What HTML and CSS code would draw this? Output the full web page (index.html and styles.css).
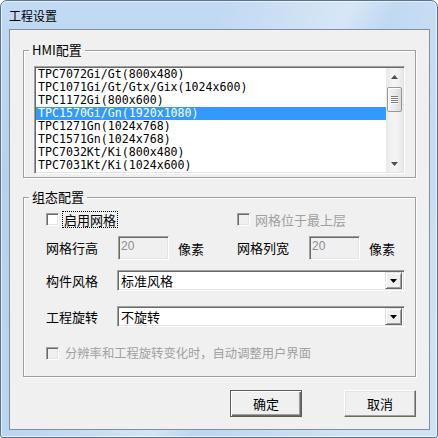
FILE: index.html
```html
<!DOCTYPE html>
<html lang="zh-CN">
<head>
<meta charset="utf-8">
<title>工程设置</title>
<link rel="stylesheet" href="styles.css">
</head>
<body>
<div class="window">
  <div class="titlebar"><span class="title">工程设置</span></div>
  <div class="client">
    <fieldset class="group group-hmi">
      <legend class="group-title">HMI配置</legend>
      <div class="listbox">
        <ul class="items">
          <li>TPC7072Gi/Gt(800x480)</li>
          <li>TPC1071Gi/Gt/Gtx/Gix(1024x600)</li>
          <li>TPC1172Gi(800x600)</li>
          <li class="selected">TPC1570Gi/Gn(1920x1080)</li>
          <li>TPC1271Gn(1024x768)</li>
          <li>TPC1571Gn(1024x768)</li>
          <li>TPC7032Kt/Ki(800x480)</li>
          <li>TPC7031Kt/Ki(1024x600)</li>
        </ul>
        <div class="scrollbar">
          <div class="sb-arrow"><svg width="7" height="4" viewBox="0 0 7 4"><path d="M3.5 0 L7 4 L0 4 Z" fill="#4d4d4d"/></svg></div>
          <div class="sb-track">
            <div class="sb-thumb"><i></i><i></i><i></i><i></i></div>
          </div>
          <div class="sb-arrow"><svg width="7" height="4" viewBox="0 0 7 4"><path d="M0 0 L7 0 L3.5 4 Z" fill="#4d4d4d"/></svg></div>
        </div>
      </div>
    </fieldset>

    <fieldset class="group group-config">
      <legend class="group-title">组态配置</legend>
      <div class="row row-check">
        <div class="half">
          <span class="checkbox"></span>
          <span class="check-label focus">启用网格</span>
        </div>
        <div class="half">
          <span class="checkbox disabled"></span>
          <span class="check-label muted">网格位于最上层</span>
        </div>
      </div>
      <div class="row row-input">
        <div class="half">
          <span class="label">网格行高</span>
          <span class="textbox">20</span>
          <span class="unit">像素</span>
        </div>
        <div class="half">
          <span class="label">网格列宽</span>
          <span class="textbox">20</span>
          <span class="unit">像素</span>
        </div>
      </div>
      <div class="row row-combo first">
        <span class="label">构件风格</span>
        <div class="combo">
          <span class="combo-text">标准风格</span>
          <span class="combo-btn"><svg width="7" height="4" viewBox="0 0 7 4"><path d="M0 0 L7 0 L3.5 4 Z" fill="#000"/></svg></span>
        </div>
      </div>
      <div class="row row-combo second">
        <span class="label">工程旋转</span>
        <div class="combo">
          <span class="combo-text">不旋转</span>
          <span class="combo-btn"><svg width="7" height="4" viewBox="0 0 7 4"><path d="M0 0 L7 0 L3.5 4 Z" fill="#000"/></svg></span>
        </div>
      </div>
      <div class="row row-auto">
        <span class="checkbox disabled"></span>
        <span class="check-label muted long">分辨率和工程旋转变化时，自动调整用户界面</span>
      </div>
    </fieldset>

    <div class="buttons">
      <button class="btn default">确定</button>
      <button class="btn">取消</button>
    </div>
  </div>
</div>
</body>
</html>
```

FILE: styles.css
```css
* { box-sizing: border-box; }

html, body {
  margin: 0;
  padding: 0;
  background: #ffffff;
}

body {
  font-family: "Noto Sans CJK SC", "Liberation Sans", sans-serif;
  font-size: 13px;
  color: #000;
}

.window {
  width: 438px;
  height: 438px;
  display: flex;
  flex-direction: column;
  padding: 0 7px 7px 8px;
  border: 1px solid #5a7391;
  border-radius: 7px 7px 3px 3px;
  background:
    linear-gradient(115deg, rgba(255,255,255,0) 35%, rgba(255,255,255,0.35) 55%, rgba(255,255,255,0) 62%, rgba(255,255,255,0.3) 85%),
    linear-gradient(180deg, #c2daf3 0%, #b6d1ee 40%, #bcd6f0 100%);
  box-shadow: inset 0 0 0 1px rgba(255,255,255,0.6);
  overflow: hidden;
}

.titlebar {
  height: 28px;
  padding: 5px 0 0 0;
  flex: none;
}

.title {
  font-size: 12px;
  line-height: 14px;
  color: #000;
}

.client {
  flex: 1;
  display: flex;
  flex-direction: column;
  background: #f0f0f0;
  border: 1px solid #7e8fa2;
}

/* group boxes */
.group {
  margin: 0 0 0 13px;
  width: 393px;
  border: 1px solid #a0a0a0;
  box-shadow: 1px 1px 0 #fff, inset 1px 1px 0 #fff;
  border-radius: 0;
  min-width: 0;
}

.group-title {
  font-size: 13px;
  line-height: 14px;
  padding: 0 3px 0 3px;
  margin-left: -5px;
}

.group-hmi {
  margin-top: 13px;
  padding: 9px 10px 3px 10px;
}

.group-config {
  margin-top: 12px;
  padding: 7px 10px 14px 22px;
}

.group-config .group-title {
  margin-left: -17px;
}

/* listbox */
.listbox {
  display: flex;
  height: 108px;
  border: 1px solid;
  border-color: #a0a0a0 #ffffff #ffffff #a0a0a0;
  box-shadow: inset 1px 1px 0 #696969, inset -1px -1px 0 #e3e3e3;
  background: #fff;
  padding: 1px;
}

.items {
  flex: 1;
  list-style: none;
  margin: 0;
  padding: 0;
  overflow: hidden;
}

.items li {
  height: 13px;
  line-height: 13px;
  padding-left: 2px;
  font-family: "DejaVu Sans Mono", "Liberation Mono", monospace;
  font-size: 11.6px;
  white-space: nowrap;
  color: #000;
}

.items li.selected {
  background: #3399ff;
  color: #fff;
}

.scrollbar {
  width: 17px;
  flex: none;
  display: flex;
  flex-direction: column;
  background: linear-gradient(90deg, #e8e8e8, #f4f4f4 40%, #f4f4f4 60%, #e8e8e8);
}

.sb-arrow {
  height: 17px;
  display: flex;
  align-items: center;
  justify-content: center;
  flex: none;
}

.sb-track {
  flex: 1;
  padding-top: 2px;
}

.sb-thumb {
  margin: 0 1px;
  height: 25px;
  border: 1px solid #979797;
  border-radius: 2px;
  background: linear-gradient(90deg, #f2f2f2, #ebebeb 50%, #d9d9d9);
  box-shadow: inset 1px 1px 0 #fff;
  display: flex;
  flex-direction: column;
  align-items: center;
  justify-content: center;
  gap: 1px;
}

.sb-thumb i {
  display: block;
  width: 7px;
  height: 1px;
  background: #7a7a7a;
  box-shadow: 0 1px 0 #fff;
}

/* rows in config group */
.row {
  display: flex;
  align-items: center;
}

.half {
  width: 191px;
  display: flex;
  align-items: center;
  flex: none;
}

.row-check {
  height: 17px;
}

.row-input {
  margin-top: 8px;
  height: 24px;
}

.row-combo {
  height: 21px;
}

.row-combo.first {
  margin-top: 10px;
}

.row-combo.second {
  margin-top: 15px;
}

.row-auto {
  margin-top: 18px;
  height: 17px;
}

.checkbox {
  width: 13px;
  height: 13px;
  flex: none;
  border: 1px solid;
  border-color: #a0a0a0 #fff #fff #a0a0a0;
  box-shadow: inset 1px 1px 0 #696969, inset -1px -1px 0 #e3e3e3;
  background: #fff;
}

.checkbox.disabled {
  background: #f0f0f0;
}

.check-label {
  margin-left: 3px;
  padding: 0 1px;
  line-height: 15px;
  border: 1px solid transparent;
  white-space: nowrap;
}

.check-label.focus {
  border: 1px dotted #000;
}

.muted {
  color: #a0a0a0;
}

.check-label.long {
  margin-left: 4px;
  font-size: 12.3px;
}

.label {
  width: 72px;
  flex: none;
  line-height: 16px;
}

.row-combo .label {
  width: 71px;
}

.textbox {
  width: 51px;
  height: 24px;
  flex: none;
  border: 1px solid;
  border-color: #a0a0a0 #fff #fff #a0a0a0;
  box-shadow: inset 1px 1px 0 #696969, inset -1px -1px 0 #e3e3e3;
  background: #f0f0f0;
  font-family: "Liberation Sans", sans-serif;
  font-size: 12px;
  color: #8d8d8d;
  padding: 2px 0 0 2px;
  line-height: 14px;
}

.unit {
  margin-left: 9px;
}

.combo {
  width: 288px;
  height: 21px;
  display: flex;
  align-items: center;
  border: 1px solid;
  border-color: #a0a0a0 #fff #fff #a0a0a0;
  box-shadow: inset 1px 1px 0 #696969, inset -1px -1px 0 #e3e3e3;
  background: #fff;
  padding: 2px;
}

.combo-text {
  flex: 1;
  padding-left: 1px;
  line-height: 16px;
}

.combo-btn {
  width: 17px;
  height: 17px;
  flex: none;
  display: flex;
  align-items: center;
  justify-content: center;
  background: #f0f0f0;
  border: 1px solid;
  border-color: #e3e3e3 #696969 #696969 #e3e3e3;
  box-shadow: inset 1px 1px 0 #fff, inset -1px -1px 0 #a0a0a0;
}

/* buttons */
.buttons {
  display: flex;
  justify-content: flex-end;
  gap: 42px;
  margin-top: 13px;
  padding-right: 13px;
}

.btn {
  width: 72px;
  height: 27px;
  margin: 0;
  padding: 0;
  font-family: "Noto Sans CJK SC", sans-serif;
  font-size: 13px;
  color: #000;
  background: #f0f0f0;
  border: 1px solid;
  border-color: #fff #696969 #696969 #fff;
  box-shadow: inset -1px -1px 0 #a0a0a0, inset 1px 1px 0 #e3e3e3;
  border-radius: 0;
}

.btn.default {
  border: 1px solid #5a5a5a;
  box-shadow: inset 1px 1px 0 #fff, inset -1px -1px 0 #696969, inset -2px -2px 0 #a0a0a0;
}
```
